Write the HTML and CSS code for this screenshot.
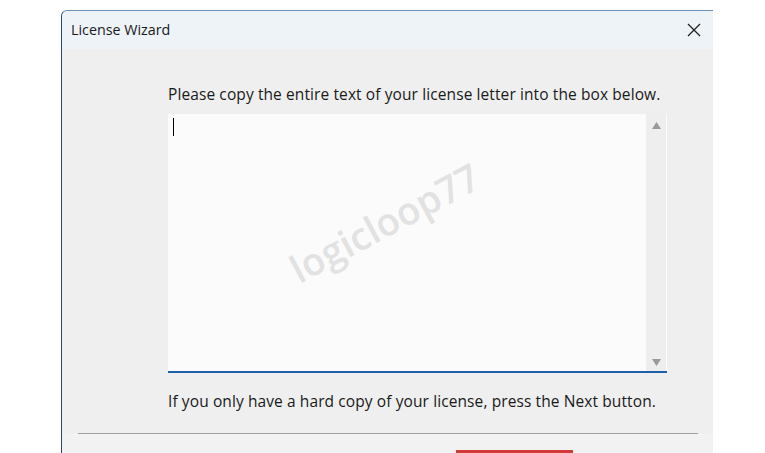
FILE: index.html
```html
<!DOCTYPE html>
<html>
<head>
<meta charset="utf-8">
<link rel="stylesheet" href="styles.css">
</head>
<body>
<div class="dialog">
  <div class="titlebar">
    <span class="title">License Wizard</span>
    <svg class="close" width="14" height="14" viewBox="0 0 14 14"><path d="M1 1 L13 13 M13 1 L1 13" stroke="#222" stroke-width="1.3" fill="none"/></svg>
  </div>
  <div class="content">
    <p class="prompt">Please copy the entire text of your license letter into the box below.</p>
    <div class="textbox">
      <div class="editarea"><span class="caret"></span></div>
      <div class="scrollbar">
        <svg width="11" height="9" viewBox="0 0 11 9"><path d="M5.5 1 L10 8 L1 8 Z" fill="#9a9a9a"/></svg>
        <svg width="11" height="9" viewBox="0 0 11 9"><path d="M1 1 L10 1 L5.5 8 Z" fill="#9a9a9a"/></svg>
      </div>
      <div class="watermark">logicloop77</div>
    </div>
    <p class="note">If you only have a hard copy of your license, press the Next button.</p>
    <div class="separator"></div>
  </div>
  <div class="footer"><span class="redbar"></span></div>
</div>
</body>
</html>
```
FILE: styles.css
```css
html, body {
  margin: 0;
  padding: 0;
  background: #ffffff;
  width: 765px;
  height: 453px;
  overflow: hidden;
}
.dialog {
  margin: 10px 0 0 61px;
  width: 652px;
  height: 443px;
  display: flex;
  flex-direction: column;
  background: #efefef;
  border-left: 1px solid #2a4a6a;
  border-top: 1px solid #6a8fb5;
  border-top-left-radius: 6px;
  box-sizing: border-box;
  font-family: "Open Sans", "Noto Sans", sans-serif;
  color: #1a1a1a;
}
.titlebar {
  height: 38px;
  flex: none;
  display: flex;
  align-items: center;
  justify-content: space-between;
  background: #eef3f8;
  padding: 0 12px 2px 9px;
  box-sizing: border-box;
  border-top-left-radius: 6px;
}
.title {
  font-size: 14.3px;
}
.close {
  display: block;
  margin-top: 1px;
}
.content {
  flex: 1;
  display: flex;
  flex-direction: column;
  padding: 0 16px 0 16px;
}
.prompt {
  margin: 34px 0 0 90px;
  font-size: 15.5px;
  letter-spacing: 0.1px;
  height: 22px;
  line-height: 22px;
}
.textbox {
  position: relative;
  margin: 9px 0 0 90px;
  width: 499px;
  height: 259px;
  display: flex;
  background: #fbfbfb;
  border-bottom: 2px solid #1f5fa6;
  box-sizing: border-box;
  overflow: hidden;
}
.editarea {
  flex: 1;
  padding: 4px 0 0 5px;
}
.caret {
  display: block;
  width: 1px;
  height: 18px;
  background: #000;
}
.scrollbar {
  width: 20px;
  background: #eeeeee;
  display: flex;
  flex-direction: column;
  justify-content: space-between;
  align-items: center;
  padding: 7px 0 4px;
  margin-right: 1px;
}
.scrollbar svg { display: block; }
.watermark {
  position: absolute;
  left: 112px;
  top: 82px;
  font-size: 38px;
  font-weight: 600;
  color: #e2e2e2;
  transform: rotate(-28deg);
  font-family: "Open Sans", sans-serif;
  pointer-events: none;
}
.note {
  margin: 17px 0 0 90px;
  font-size: 15.5px;
  letter-spacing: 0.1px;
  line-height: 22px;
}
.separator {
  margin-top: 21px;
  height: 1px;
  background: #a0a0a0;
  width: 620px;
}
.footer {
  flex: 1;
  background: #f2f2f2;
  position: relative;
}
.redbar {
  position: absolute;
  left: 394px;
  bottom: 0;
  width: 117px;
  height: 3px;
  background: #d23a3a;
}
```
